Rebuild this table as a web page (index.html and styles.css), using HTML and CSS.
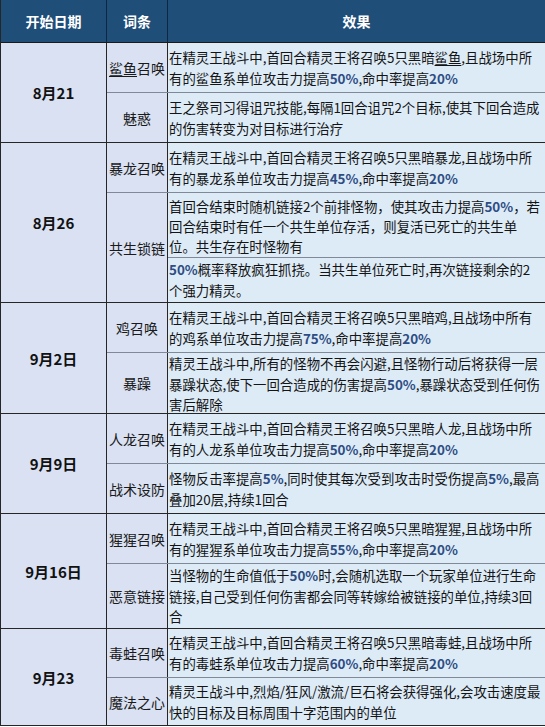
FILE: index.html
```html
<!DOCTYPE html>
<html lang="zh-CN">
<head>
<meta charset="utf-8">
<title>精灵王词条</title>
<link rel="stylesheet" href="styles.css">
</head>
<body>
<div class="table">
  <div class="head">
    <div class="hcell c-date">开始日期</div>
    <div class="hcell c-term">词条</div>
    <div class="hcell c-effect">效果</div>
  </div>

  <div class="group">
    <div class="date">8月21</div>
    <div class="items">
      <div class="item">
        <div class="term"><span class="ul">鲨鱼</span>召唤</div>
        <div class="effect">在精灵王战斗中,首回合精灵王将召唤5只黑暗<span class="ul">鲨鱼</span>,且战场中所<br>有的鲨鱼系单位攻击力提高<b>50%</b>,命中率提高<b>20%</b></div>
      </div>
      <div class="item">
        <div class="term">魅惑</div>
        <div class="effect">王之祭司习得诅咒技能,每隔1回合诅咒2个目标,使其下回合造成<br>的伤害转变为对目标进行治疗</div>
      </div>
    </div>
  </div>

  <div class="group">
    <div class="date">8月26</div>
    <div class="items">
      <div class="item">
        <div class="term">暴龙召唤</div>
        <div class="effect">在精灵王战斗中,首回合精灵王将召唤5只黑暗暴龙,且战场中所<br>有的暴龙系单位攻击力提高<b>45%</b>,命中率提高<b>20%</b></div>
      </div>
      <div class="item split">
        <div class="term">共生锁链</div>
        <div class="effects">
          <div class="effect part-a">首回合结束时随机链接2个前排怪物，使其攻击力提高<b>50%</b>，若<br>回合结束时有任一个共生单位存活，则复活已死亡的共生单<br>位。共生存在时怪物有</div>
          <div class="effect part-b"><b>50%</b>概率释放疯狂抓挠。当共生单位死亡时,再次链接剩余的2<br>个强力精灵。</div>
        </div>
      </div>
    </div>
  </div>

  <div class="group">
    <div class="date">9月2日</div>
    <div class="items">
      <div class="item">
        <div class="term">鸡召唤</div>
        <div class="effect">在精灵王战斗中,首回合精灵王将召唤5只黑暗鸡,且战场中所有<br>的鸡系单位攻击力提高<b>75%</b>,命中率提高<b>20%</b></div>
      </div>
      <div class="item tall">
        <div class="term">暴躁</div>
        <div class="effect">精灵王战斗中,所有的怪物不再会闪避,且怪物行动后将获得一层<br>暴躁状态,使下一回合造成的伤害提高<b>50%</b>,暴躁状态受到任何伤<br>害后解除</div>
      </div>
    </div>
  </div>

  <div class="group">
    <div class="date">9月9日</div>
    <div class="items">
      <div class="item">
        <div class="term">人龙召唤</div>
        <div class="effect">在精灵王战斗中,首回合精灵王将召唤5只黑暗人龙,且战场中所<br>有的人龙系单位攻击力提高<b>50%</b>,命中率提高<b>20%</b></div>
      </div>
      <div class="item">
        <div class="term">战术设防</div>
        <div class="effect">怪物反击率提高<b>5%</b>,同时使其每次受到攻击时受伤提高<b>5%</b>,最高<br>叠加20层,持续1回合</div>
      </div>
    </div>
  </div>

  <div class="group">
    <div class="date">9月16日</div>
    <div class="items">
      <div class="item">
        <div class="term">猩猩召唤</div>
        <div class="effect">在精灵王战斗中,首回合精灵王将召唤5只黑暗猩猩,且战场中所<br>有的猩猩系单位攻击力提高<b>55%</b>,命中率提高<b>20%</b></div>
      </div>
      <div class="item taller">
        <div class="term">恶意链接</div>
        <div class="effect">当怪物的生命值低于<b>50%</b>时,会随机选取一个玩家单位进行生命<br>链接,自己受到任何伤害都会同等转嫁给被链接的单位,持续3回<br>合</div>
      </div>
    </div>
  </div>

  <div class="group compact">
    <div class="date">9月23</div>
    <div class="items">
      <div class="item">
        <div class="term">毒蛙召唤</div>
        <div class="effect">在精灵王战斗中,首回合精灵王将召唤5只黑暗毒蛙,且战场中所<br>有的毒蛙系单位攻击力提高<b>60%</b>,命中率提高<b>20%</b></div>
      </div>
      <div class="item">
        <div class="term">魔法之心</div>
        <div class="effect">精灵王战斗中,烈焰/狂风/激流/巨石将会获得强化,会攻击速度最<br>快的目标及目标周围十字范围内的单位</div>
      </div>
    </div>
  </div>
</div>
</body>
</html>
```

FILE: styles.css
```css
* {
  box-sizing: border-box;
}

html, body {
  margin: 0;
  padding: 0;
  background: #ffffff;
}

body {
  width: 545px;
  height: 727px;
  overflow: hidden;
  font-family: "Noto Sans CJK SC", "Noto Sans", sans-serif;
  color: #141414;
}

.table {
  display: flex;
  flex-direction: column;
  width: 545px;
  border-left: 1px solid #262626;
}

/* header */
.head {
  display: flex;
  height: 43px;
  background: #1f4e79;
  border-bottom: 1px solid #1a1a1a;
}

.hcell {
  display: flex;
  align-items: center;
  justify-content: center;
  color: #ffffff;
  font-weight: 700;
  font-size: 14px;
  border-right: 1px solid #0f2740;
}

.c-date {
  width: 106px;
}

.c-term {
  width: 61px;
}

.c-effect {
  flex: 1;
  border-right: none;
}

/* groups */
.group {
  display: flex;
  border-bottom: 1px solid #262626;
}

.date {
  width: 106px;
  flex: none;
  display: flex;
  align-items: center;
  justify-content: center;
  background: #d9e1f2;
  border-right: 1px solid #262626;
  font-weight: 700;
  font-size: 15px;
  color: #111111;
}

.items {
  flex: 1;
  display: flex;
  flex-direction: column;
}

.item {
  display: flex;
  height: 50px;
  border-bottom: 1px solid #7f8998;
}

.item:last-child {
  height: 49px;
  border-bottom: none;
}

.item.tall:last-child {
  height: 60px;
}

.item.taller:last-child {
  height: 64px;
}

.item.split:last-child {
  height: 109px;
}

.compact .item {
  height: 49px;
}

.compact .item:last-child {
  height: 47px;
}

.term {
  width: 61px;
  flex: none;
  display: flex;
  align-items: center;
  justify-content: center;
  background: #d9e1f2;
  border-right: 1px solid #262626;
  font-size: 14px;
  color: #1a1a1a;
  white-space: nowrap;
}

.effects {
  flex: 1;
  display: flex;
  flex-direction: column;
}

.effect {
  flex: 1;
  display: block;
  align-content: center;
  padding: 0 0 0 1px;
  background: #ddebf7;
  font-size: 13.4px;
  line-height: 21px;
  white-space: nowrap;
  overflow: hidden;
}

.part-a {
  flex: none;
  height: 65px;
  border-bottom: 1px solid #7f8998;
  line-height: 20px;
  padding-top: 2px;
}

.part-b {
  flex: 1;
}

.tall .effect,
.taller .effect {
  line-height: 20.5px;
}

.effect b {
  font-weight: 700;
  color: #2e4d84;
}

.ul {
  text-decoration: underline;
  text-decoration-thickness: 1px;
  text-underline-offset: 2px;
}
```
